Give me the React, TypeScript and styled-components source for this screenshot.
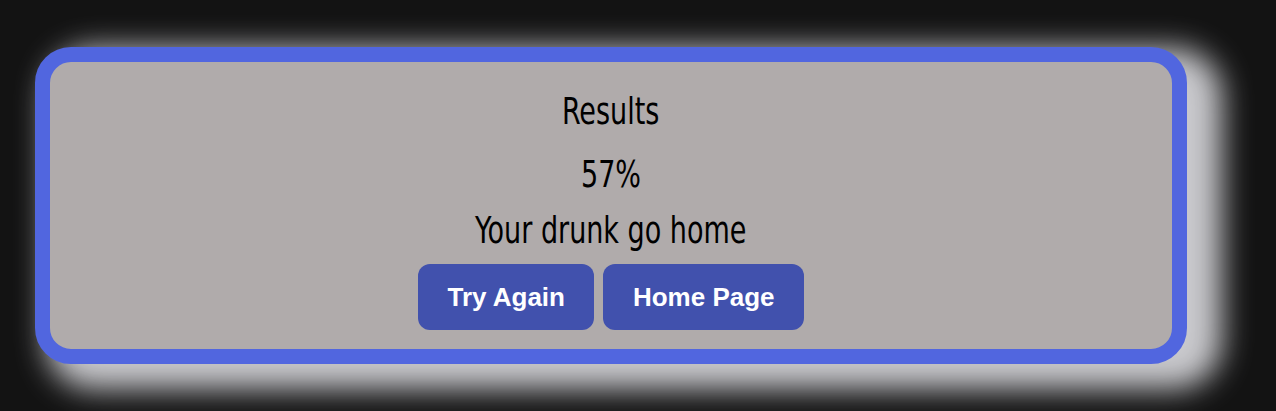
import { createGlobalStyle, styled } from "styled-components";

const GlobalStyle = createGlobalStyle`
  html,
  body {
    margin: 0;
    background: #131313;
  }
`;

const App = () => {
  const onTryAgain = () => {};
  const onHome = () => {};

  return (
    <>
      <GlobalStyle />
      <SPage>
        <SCard>
          <STitle>Results</STitle>
          <SScore>57%</SScore>
          <SMessage>Your drunk go home</SMessage>
          <SButtonRow>
            <SButton onClick={onTryAgain}>Try Again</SButton>
            <SButton onClick={onHome}>Home Page</SButton>
          </SButtonRow>
        </SCard>
      </SPage>
    </>
  );
};

const SPage = styled.div`
  padding: 47px 0 0 35px;
  height: 411px;
  box-sizing: border-box;
`;

const SCard = styled.div`
  box-sizing: border-box;
  width: 1152px;
  height: 317px;
  display: flex;
  flex-direction: column;
  align-items: center;
  padding: 29px 0 18px;
  background: #b0abab;
  border: 15px solid #5166df;
  border-radius: 36px;
  box-shadow: 23px 13px 30px 12px #c9c9cd;
  font-family: "DejaVu Sans Condensed", "DejaVu Sans", sans-serif;
  font-stretch: condensed;
  color: #000000;
`;

// narrow, tall headline look
const SLine = styled.div`
  font-size: 38px;
  line-height: 40px;
  font-weight: 400;
  transform: scaleX(0.79);
`;

const STitle = styled(SLine)`
  margin-bottom: 23px;
`;

const SScore = styled(SLine)`
  margin-bottom: 16px;
`;

const SMessage = styled(SLine)`
  margin-bottom: 14px;
`;

const SButtonRow = styled.div`
  display: flex;
  gap: 9px;
`;

const SButton = styled.button`
  height: 66px;
  padding: 0 29.5px;
  border: none;
  border-radius: 12px;
  background-color: #4151ad;
  color: #ffffff;
  font-family: "Liberation Sans", Arial, sans-serif;
  font-size: 26px;
  font-weight: 700;
  cursor: pointer;
`;

export default App;
